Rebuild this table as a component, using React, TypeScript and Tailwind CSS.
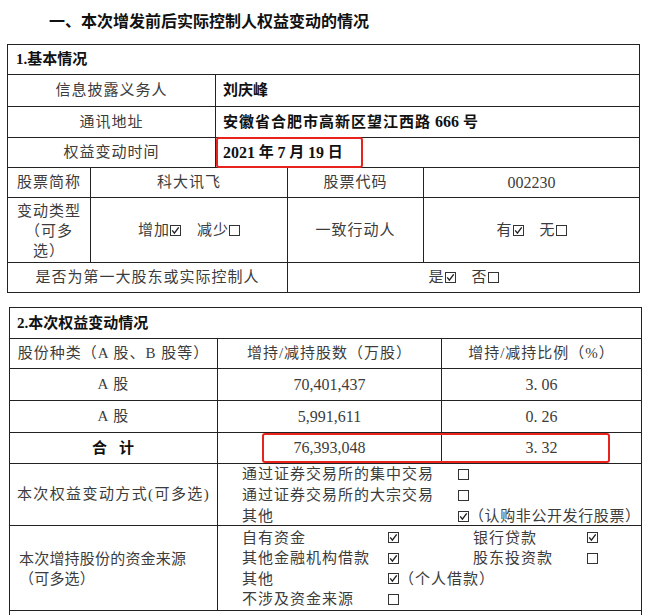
import React from "react";

const font = "font-['Liberation_Serif','Noto_Sans_CJK_SC',serif]";
const cell = "border-r border-b border-[#222] flex items-center justify-center";

function Box({ checked = false }: { checked?: boolean }) {
  return (
    <svg width="11" height="11" viewBox="0 0 11 11" className="inline-block shrink-0">
      <rect x="0.5" y="0.5" width="10" height="10" fill="none" stroke="#333" strokeWidth="1" />
      {checked && (
        <path d="M2.2 5.4 L4.4 8.1 L8.7 2.4" fill="none" stroke="#222" strokeWidth="1.4" />
      )}
    </svg>
  );
}

function Num({ children }: { children: React.ReactNode }) {
  return <span className="text-[16px] tracking-normal">{children}</span>;
}

export default function App() {
  return (
    <div className={`w-[645px] bg-white text-[#3c3c3c] text-[15px] tracking-[1px] ${font}`}>
      <div className="h-[44px] flex items-center pl-[49px] text-[16px] font-bold tracking-normal text-[#111]">
        一、本次增发前后实际控制人权益变动的情况
      </div>

      {/* 1. 基本情况 */}
      <div className="ml-[7px] w-[633px] grid grid-cols-[83px_125px_72px_136px_216px] grid-rows-[30px_32px_31px_30px_30px_65px_30px] border-l border-t border-[#222]">
        <div className={`${cell} col-span-5 justify-start pl-[8px] font-bold tracking-normal text-[#111]`}>
          1.基本情况
        </div>

        <div className={`${cell} col-span-2`}>信息披露义务人</div>
        <div className={`${cell} col-span-3 justify-start pl-[7px] font-bold tracking-normal text-[#111]`}>
          刘庆峰
        </div>

        <div className={`${cell} col-span-2`}>通讯地址</div>
        <div className={`${cell} col-span-3 justify-start pl-[7px] font-bold tracking-[1px] text-[#111]`}>
          安徽省合肥市高新区望江西路 <Num>&nbsp;666&nbsp;</Num>号
        </div>

        <div className={`${cell} col-span-2`}>权益变动时间</div>
        <div className={`${cell} col-span-3 justify-start pl-[7px] font-bold tracking-normal text-[#111] relative`}>
          <Num>2021</Num>&nbsp;年&nbsp;<Num>7</Num>&nbsp;月&nbsp;<Num>19</Num>&nbsp;日
          <div className="absolute left-0 top-[-1px] w-[147px] h-[31px] border-2 border-[#e8231e] rounded-[3px]" />
        </div>

        <div className={cell}>股票简称</div>
        <div className={`${cell} col-span-2`}>科大讯飞</div>
        <div className={cell}>股票代码</div>
        <div className={cell}>
          <Num>002230</Num>
        </div>

        <div className={`${cell} text-center leading-[20px] pt-[1px]`}>
          <span>
            变动类型
            <br />
            （可多
            <br />
            选）
          </span>
        </div>
        <div className={`${cell} col-span-2 gap-[16px]`}>
          <span className="inline-flex items-center">
            增加<Box checked />
          </span>
          <span className="inline-flex items-center">
            减少<Box />
          </span>
        </div>
        <div className={cell}>一致行动人</div>
        <div className={`${cell} gap-[16px]`}>
          <span className="inline-flex items-center">
            有<Box checked />
          </span>
          <span className="inline-flex items-center">
            无<Box />
          </span>
        </div>

        <div className={`${cell} col-span-3`}>是否为第一大股东或实际控制人</div>
        <div className={`${cell} col-span-2 gap-[16px]`}>
          <span className="inline-flex items-center">
            是<Box checked />
          </span>
          <span className="inline-flex items-center">
            否<Box />
          </span>
        </div>
      </div>

      {/* 2. 本次权益变动情况 */}
      <div className="relative mt-[14px] ml-[9px] w-[633px]">
        <div className="grid grid-cols-[208px_224px_200px] grid-rows-[31px_30px_32px_32px_31px_62px_85px_30px] border-l border-t border-[#222]">
          <div className={`${cell} col-span-3 justify-start pl-[7px] font-bold tracking-normal text-[#111]`}>
            2.本次权益变动情况
          </div>

          <div className={cell}>股份种类（A 股、B 股等）</div>
          <div className={cell}>增持/减持股数（万股）</div>
          <div className={cell}>增持/减持比例（%）</div>

          <div className={cell}>A 股</div>
          <div className={cell}>
            <Num>70,401,437</Num>
          </div>
          <div className={cell}>
            <Num>3. 06</Num>
          </div>

          <div className={cell}>A 股</div>
          <div className={cell}>
            <Num>5,991,611</Num>
          </div>
          <div className={cell}>
            <Num>0. 26</Num>
          </div>

          <div className={`${cell} gap-[11px] font-bold text-[#111]`}>
            <span>合</span>
            <span>计</span>
          </div>
          <div className={cell}>
            <Num>76,393,048</Num>
          </div>
          <div className={cell}>
            <Num>3. 32</Num>
          </div>

          <div className={`${cell} whitespace-nowrap tracking-[1.4px]`}>本次权益变动方式(可多选)</div>
          <div className={`${cell} col-span-2 flex-col items-stretch pl-[24px] leading-[21px] pt-[2px]`}>
            <div className="grid grid-cols-[216px_1fr] items-center">
              <span>通过证券交易所的集中交易</span>
              <Box />
            </div>
            <div className="grid grid-cols-[216px_1fr] items-center">
              <span>通过证券交易所的大宗交易</span>
              <Box />
            </div>
            <div className="grid grid-cols-[216px_1fr] items-center">
              <span>其他</span>
              <span className="inline-flex items-center whitespace-nowrap tracking-[0.6px]">
                <Box checked />
                （认购非公开发行股票）
              </span>
            </div>
          </div>

          <div className={`${cell} flex-col items-start justify-center pl-[9px] leading-[20px] pt-[2px] tracking-[0.2px]`}>
            <span>本次增持股份的资金来源</span>
            <span>（可多选）</span>
          </div>
          <div className={`${cell} col-span-2 items-center pl-[24px] leading-[20.5px] pt-[1px]`}>
            <div className="w-full grid grid-cols-[146px_85px_114px_1fr] items-center">
              <span>自有资金</span>
              <Box checked />
              <span>银行贷款</span>
              <Box checked />

              <span>其他金融机构借款</span>
              <Box checked />
              <span>股东投资款</span>
              <Box />

              <span>其他</span>
              <span className="col-span-3 inline-flex items-center">
                <Box checked />
                （个人借款）
              </span>

              <span>不涉及资金来源</span>
              <span className="col-span-3 inline-flex items-center">
                <Box />
              </span>
            </div>
          </div>

          <div className={`${cell} col-span-3`} />
        </div>

        <div className="absolute left-[253px] top-[126px] w-[348px] h-[30px] border-2 border-[#e8231e] rounded-[3px]" />
      </div>
    </div>
  );
}
